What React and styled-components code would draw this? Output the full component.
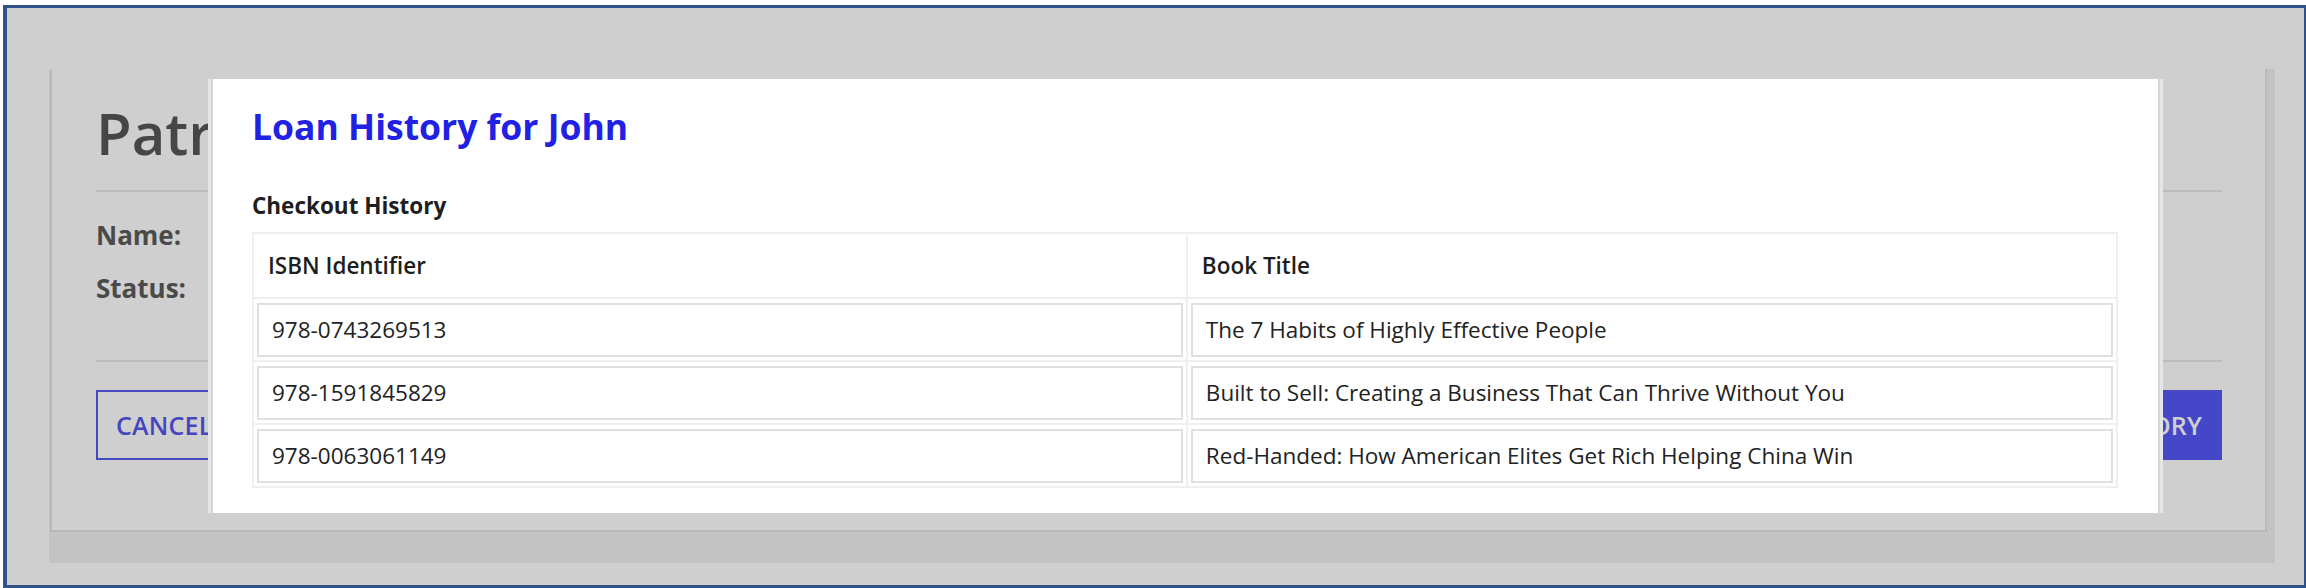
import React from 'react'
import styled, { createGlobalStyle } from 'styled-components'

const GlobalStyle = createGlobalStyle`
	html, body {
		margin: 0;
		padding: 0;
		background: #fff;
	}
	body {
		font-family: "Open Sans", "Noto Sans", sans-serif;
		color: #222;
	}
`

const loans = [
	{ isbn: '978-0743269513', title: 'The 7 Habits of Highly Effective People' },
	{ isbn: '978-1591845829', title: 'Built to Sell: Creating a Business That Can Thrive Without You' },
	{ isbn: '978-0063061149', title: 'Red-Handed: How American Elites Get Rich Helping China Win' },
]

const patron = { name: 'John', status: 'Active' }

export default function App() {
	return (
		<>
			<GlobalStyle />
			<Frame>
				<Page>
					<CardShell>
						<Card>
							<Heading>Patron Details</Heading>
							<Rule />
							<Fields>
								<Label>Name:</Label>
								<Value>{patron.name}</Value>
								<Label>Status:</Label>
								<Value>{patron.status}</Value>
							</Fields>
							<Rule $top={52} $bottom={28} />
							<Actions>
								<Button $variant="outline">Cancel</Button>
								<Button>View Loan History</Button>
							</Actions>
						</Card>
					</CardShell>
				</Page>

				<Overlay>
					<Modal>
						<ModalTitle>Loan History for {patron.name}</ModalTitle>
						<SectionTitle>Checkout History</SectionTitle>
						<HistoryTable>
							<colgroup>
								<col style={{ width: '50.1%' }} />
								<col />
							</colgroup>
							<thead>
								<tr>
									<Th>ISBN Identifier</Th>
									<Th>Book Title</Th>
								</tr>
							</thead>
							<tbody>
								{loans.map(loan => (
									<tr key={loan.isbn}>
										<Td><CellBox>{loan.isbn}</CellBox></Td>
										<Td><CellBox>{loan.title}</CellBox></Td>
									</tr>
								))}
							</tbody>
						</HistoryTable>
					</Modal>
				</Overlay>
			</Frame>
		</>
	)
}

const Frame = styled.div`
	position: relative;
	box-sizing: border-box;
	margin: 5px 0 0 3px;
	width: 2303px;
	height: 583px;
	border-style: solid;
	border-color: #2f5388;
	border-width: 3px 2px 3px 4px;
	background: #fff;
	overflow: hidden;
`

const Page = styled.div`
	padding: 61px 0 0 42px;
`

const CardShell = styled.div`
	display: inline-block;
	padding: 0 8px 31px 1px;
	background: #f1f1f1;
`

const Card = styled.div`
	box-sizing: border-box;
	width: 2217px;
	height: 463px;
	padding: 29px 43px 0 44px;
	background: #fff;
	border: 2px solid #e4e4e4;
	border-top: none;
`

const Heading = styled.h1`
	margin: 0;
	font-size: 58px;
	font-weight: 600;
	line-height: 1.2;
	color: #575757;
`

const Rule = styled.hr`
	margin: ${p => p.$top || 22}px 0 ${p => p.$bottom || 24}px;
	border: none;
	height: 2px;
	background: #e8e8e8;
`

const Fields = styled.div`
	display: grid;
	grid-template-columns: 230px 1fr;
	row-gap: 14px;
	font-size: 26px;
	line-height: 1.5;
	color: #5c5c5c;
`

const Label = styled.span`
	font-weight: 700;
`

const Value = styled.span``

const Actions = styled.div`
	display: flex;
	justify-content: space-between;
	align-items: center;
`

const Button = styled.button`
	box-sizing: border-box;
	height: 70px;
	padding: 0 18px;
	font-family: "Open Sans", sans-serif;
	font-size: 25px;
	font-weight: 600;
	text-transform: uppercase;
	letter-spacing: 0.2px;
	border: 2px solid #5658f0;
	background: ${p => (p.$variant === 'outline' ? 'transparent' : '#5458f7')};
	color: ${p => (p.$variant === 'outline' ? '#5656ee' : '#fff')};
	cursor: pointer;
`

const Overlay = styled.div`
	position: absolute;
	inset: 0;
	display: flex;
	align-items: flex-start;
	padding: 71px 0 0 201px;
	background: rgba(0, 0, 0, 0.19);
`

const Modal = styled.div`
	box-sizing: border-box;
	width: 1955px;
	padding: 26px 42px 25px 41px;
	background: #fff;
	border-left: 3px solid #e6e6e6;
	border-right: 3px solid #e6e6e6;
	box-shadow: inset 2px 0 #d6d6d6, inset -2px 0 #d6d6d6;
`

const ModalTitle = styled.h2`
	margin: 0 0 41px;
	font-size: 35.5px;
	font-weight: 700;
	line-height: 1.2;
	color: #2121e4;
`

const SectionTitle = styled.h3`
	margin: 0 0 10px;
	font-size: 22.5px;
	font-weight: 700;
	line-height: 1.5;
	color: #1e1e1e;
`

const HistoryTable = styled.table`
	width: 100%;
	table-layout: fixed;
	border-collapse: collapse;
	border: 2px solid #efefef;
	font-size: 22.5px;
	line-height: 1.5;
`

const Th = styled.th`
	height: 63px;
	padding: 0 14px;
	text-align: left;
	font-weight: 600;
	color: #1e1e1e;
	border-bottom: 2px solid #efefef;
	&:first-child {
		border-right: 2px solid #efefef;
	}
`

const Td = styled.td`
	padding: 4px 3px 3px;
	border-bottom: 2px solid #efefef;
	&:first-child {
		border-right: 2px solid #efefef;
	}
`

const CellBox = styled.div`
	box-sizing: border-box;
	height: 54px;
	display: flex;
	align-items: center;
	padding: 0 13px;
	border: 2px solid #e0e0e0;
	color: #222;
	white-space: nowrap;
`
